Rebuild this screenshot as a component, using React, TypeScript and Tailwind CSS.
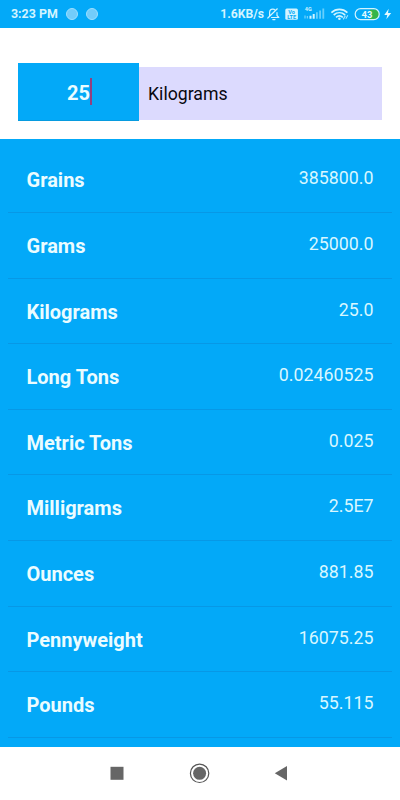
import React, { useState } from "react";

interface Conversion {
  unit: string;
  value: string;
}

const CONVERSIONS: Conversion[] = [
  { unit: "Grains", value: "385800.0" },
  { unit: "Grams", value: "25000.0" },
  { unit: "Kilograms", value: "25.0" },
  { unit: "Long Tons", value: "0.02460525" },
  { unit: "Metric Tons", value: "0.025" },
  { unit: "Milligrams", value: "2.5E7" },
  { unit: "Ounces", value: "881.85" },
  { unit: "Pennyweight", value: "16075.25" },
  { unit: "Pounds", value: "55.115" },
];

function StatusIcons() {
  return (
    <svg width="128" height="28" viewBox="266 0 128 28" fill="none" className="shrink-0">
      {/* muted bell */}
      <g stroke="#d3f4ff" strokeWidth="1.2" strokeLinecap="round" strokeLinejoin="round">
        <path d="M269.6 16v-3.2c0-2.3 1.3-3.6 3.2-3.6 1 0 1.8.3 2.4.9M271.5 17.5h7.3l-1.8-2v-3M272.8 19.6h2.2M267.8 18l9.5-9.2" />
      </g>

      {/* VoLTE */}
      <rect x="285.3" y="8.5" width="12.6" height="11.2" rx="1.5" fill="#d3f4ff" />
      <text x="291.6" y="13.6" textAnchor="middle" fontSize="5.5" fontWeight="700" fill="#03a9f8">Vo</text>
      <text x="291.6" y="18.8" textAnchor="middle" fontSize="5.5" fontWeight="700" fill="#03a9f8">LTE</text>

      {/* signal */}
      <text x="304.8" y="11" fontSize="5.5" fontWeight="700" fill="#d3f4ff">4G</text>
      <path d="M305 15.5v3M307.3 16v2.5" stroke="#8bdcff" strokeWidth="1" />
      <path d="M310.5 18.8v-3M313.7 18.8v-4.8" stroke="#d3f4ff" strokeWidth="2" />
      <path d="M316.9 18.8v-6.5M320.1 18.8v-8.3M323.3 18.8v-10.2" stroke="#66cffc" strokeWidth="1.8" />

      {/* wifi */}
      <g stroke="#d3f4ff" strokeWidth="1.7">
        <path d="M331.4 12.6c4.7-4.3 11.3-4.3 16 0" />
        <path d="M333.7 15c3.4-3 8-3 11.4 0" />
        <path d="M336 17.3c2-1.7 4.8-1.7 6.8 0" />
      </g>
      <circle cx="339.4" cy="18.8" r="1.3" fill="#d3f4ff" />
      <path d="M343.2 19.4l2.2-3.8M345.8 18.8l2-3.6" stroke="#a5e5ff" strokeWidth="1.1" />

      {/* battery */}
      <path d="M370 9.5h4.5a4.8 4.8 0 0 1 0 9.6H370z" fill="#35b54a" />
      <rect x="355.2" y="8.7" width="24" height="11" rx="5.4" stroke="#d3f4ff" strokeWidth="1.2" />
      <text x="367" y="17.5" textAnchor="middle" fontSize="9.5" fontWeight="700" fill="#e3f9ff">43</text>
      <path d="M388.7 8.8l-4.4 6.2h3l-1 4.3 4.9-6.3h-3.2z" fill="#e3f9ff" />
    </svg>
  );
}

function StatusBar() {
  return (
    <div className="h-7 shrink-0 bg-[#03a9f8] flex items-center pl-[11px] pr-1.5 text-[#d3f4ff]">
      <span className="w-[48px] whitespace-nowrap text-[12.4px] font-bold leading-none mt-px">3:23 PM</span>
      <div className="ml-[7px] flex gap-2">
        <div className="w-3 h-3 rounded-full bg-[#73ccfa] border border-[#9cdfff]" />
        <div className="w-3 h-3 rounded-full bg-[#73ccfa] border border-[#9cdfff]" />
      </div>
      <span className="ml-auto mr-[2px] text-[12.2px] font-bold leading-none mt-px">1.6KB/s</span>
      <StatusIcons />
    </div>
  );
}

function NavBar() {
  return (
    <div className="h-[53.4px] shrink-0 bg-white flex items-start justify-center pt-[15.6px]">
      <svg width="180" height="22" viewBox="0 0 180 22">
        <rect x="0.5" y="4.8" width="13" height="13" fill="#666666" />
        <circle cx="89.6" cy="11.3" r="9.2" fill="none" stroke="#555555" strokeWidth="1.2" />
        <circle cx="89.6" cy="11.3" r="6.5" fill="#666666" />
        <path d="M177 4v14.5L164.8 11.2z" fill="#666666" />
      </svg>
    </div>
  );
}

export default function App() {
  const [amount] = useState("25");

  return (
    <div className="w-[400px] h-[800px] flex flex-col overflow-hidden bg-white font-['Roboto',sans-serif]">
      <StatusBar />

      <div className="h-[111px] shrink-0 flex items-start pt-[35px] px-[18px]">
        <div className="w-[121px] h-[58px] bg-[#03a9f8] flex items-center justify-center border-b border-[#079bdf]">
          <span className="mt-[2px] text-[20px] font-bold text-[#ebfcff]">{amount}</span>
          <div className="w-[2px] h-[27px] -mr-[2px] bg-[#93407f]" />
        </div>
        <div className="flex-1 h-[53px] mt-1 bg-[#dcdafe] flex items-center pl-[9px]">
          <span className="mt-[2px] text-[17.7px] text-[#08080f]">Kilograms</span>
        </div>
      </div>

      <div className="flex-1 min-h-0 overflow-hidden bg-[#03a9f8] px-2 pt-[8.4px]">
        {CONVERSIONS.map((row) => (
          <div
            key={row.unit}
            className="h-[65.6px] flex justify-between pl-[18.5px] pr-[18.5px] border-b border-[#0798e6]"
          >
            <span className="pt-[19px] text-[20px] leading-[28px] font-bold text-[#ebfcff]">{row.unit}</span>
            <span className="pt-[17px] text-[17.8px] leading-[28px] text-[#d8f7ff]">{row.value}</span>
          </div>
        ))}
      </div>

      <NavBar />
    </div>
  );
}
